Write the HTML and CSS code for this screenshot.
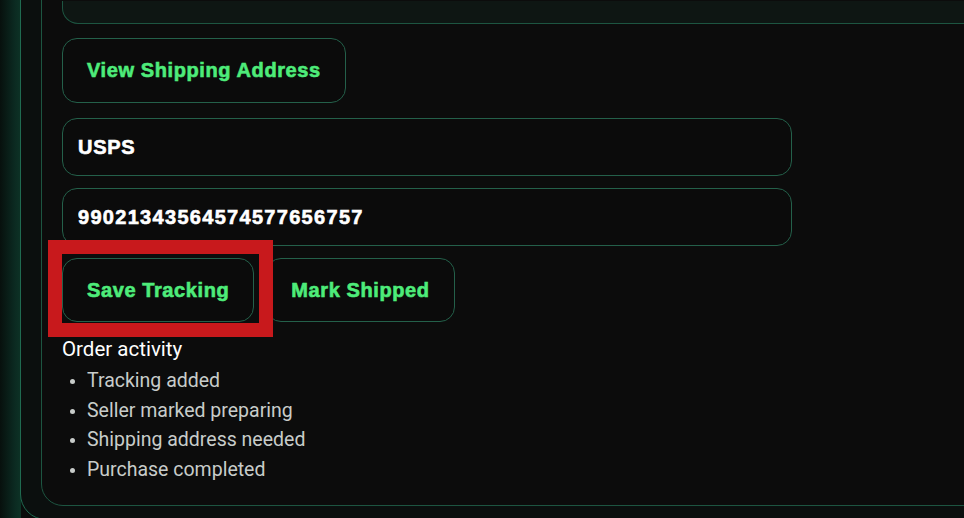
FILE: index.html
```html
<!DOCTYPE html>
<html lang="en">
<head>
<meta charset="utf-8">
<title>Order</title>
<link rel="stylesheet" href="styles.css">
</head>
<body>
<div class="panel">
  <div class="card">
    <div class="summary"></div>
    <button class="btn btn-wide" type="button">View Shipping Address</button>
    <input class="field field-first" type="text" value="USPS">
    <input class="field field-number" type="text" value="99021343564574577656757">
    <div class="actions">
      <button class="btn" type="button">Save Tracking</button>
      <button class="btn" type="button">Mark Shipped</button>
      <div class="highlight"></div>
    </div>
    <div class="activity">
      <div class="activity-title">Order activity</div>
      <ul class="activity-list">
        <li>Tracking added</li>
        <li>Seller marked preparing</li>
        <li>Shipping address needed</li>
        <li>Purchase completed</li>
      </ul>
    </div>
  </div>
</div>
</body>
</html>
```

FILE: styles.css
```css
html, body {
  margin: 0;
  padding: 0;
  height: 100%;
  overflow: hidden;
}

body {
  background: linear-gradient(90deg, #07100d 0%, #0b2a21 70%, #0d3326 100%) no-repeat;
  background-size: 21px 100%;
  background-color: #0a0c0b;
  font-family: Roboto, "Liberation Sans", sans-serif;
}

.panel {
  margin: -81px -60px 0 20px;
  border: 1px solid #1f6a50;
  border-radius: 26px;
  background: #0b0f0e;
  padding: 0 0 13px 20px;
}

.card {
  border: 1px solid #1d5541;
  border-radius: 22px;
  background: #0c0c0c;
  padding: 80px 0 21px 20px;
}

.summary {
  height: 22px;
  margin-right: -20px;
  border: 1px solid #1d5541;
  border-top: none;
  border-radius: 0 0 16px 16px;
  background: #0e1613;
  margin-bottom: 14px;
}

.btn {
  display: inline-flex;
  align-items: center;
  height: 64px;
  padding: 0 24px;
  border: 1px solid #24604a;
  border-radius: 15px;
  background: #0b0b0b;
  color: #4eec7a;
  font-family: "Liberation Sans", Arial, sans-serif;
  font-weight: 700;
  font-size: 20px;
  letter-spacing: 0.6px;
  -webkit-text-stroke: 0.6px #4eec7a;
  cursor: pointer;
}

.btn-wide {
  display: flex;
  height: 65px;
}

.field {
  display: block;
  box-sizing: border-box;
  width: 730px;
  height: 58px;
  margin-top: 12px;
  padding: 0 15px;
  border: 1px solid #24604a;
  border-radius: 15px;
  background: #0b0b0b;
  color: #ffffff;
  font-family: "Liberation Sans", Arial, sans-serif;
  font-weight: 700;
  font-size: 20px;
  letter-spacing: 0.7px;
  -webkit-text-stroke: 0.6px #ffffff;
  outline: none;
}

.field-first {
  margin-top: 15px;
}

.field-number {
  letter-spacing: 1.3px;
}

.actions {
  position: relative;
  display: flex;
  gap: 12px;
  margin-top: 12px;
}

.actions .btn {
  height: 64px;
}

.highlight {
  position: absolute;
  left: -14px;
  top: -18px;
  width: 225px;
  height: 97px;
  box-sizing: border-box;
  border: 14px solid #c8191c;
  pointer-events: none;
}

.activity {
  margin-top: 15px;
}

.activity-title {
  color: #ffffff;
  font-size: 20.5px;
  line-height: 24px;
}

.activity-list {
  margin: 5px 0 0;
  padding-left: 25px;
  color: #c8ccca;
  font-size: 19.5px;
  line-height: 29.5px;
}

.activity-list li::marker {
  font-size: 16px;
}
```
